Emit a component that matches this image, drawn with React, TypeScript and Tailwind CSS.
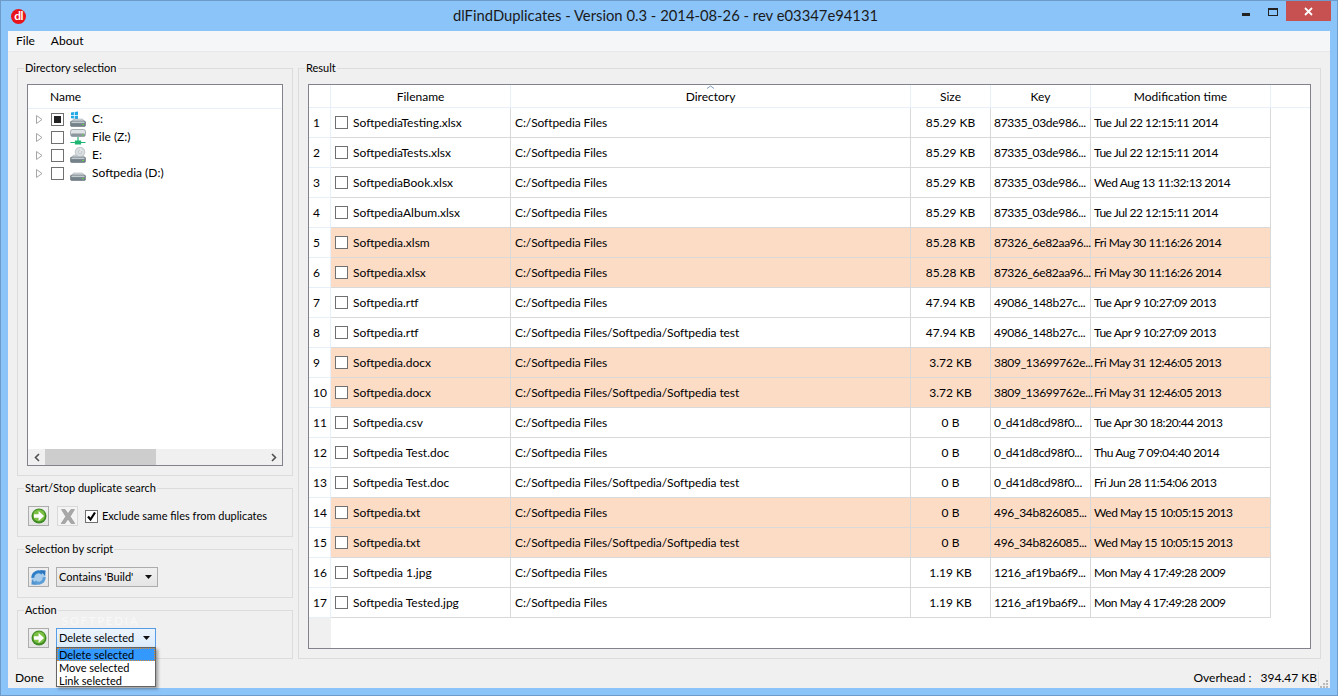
import type { ReactNode } from "react";

type Row = { name: string; dir: string; size: string; key: string; time: string; dup?: boolean };

const ROOT = "C:/Softpedia Files";
const DEEP = "C:/Softpedia Files/Softpedia/Softpedia test";

const rows: Row[] = [
  { name: "SoftpediaTesting.xlsx", dir: ROOT, size: "85.29 KB", key: "87335_03de986...", time: "Tue Jul 22 12:15:11 2014" },
  { name: "SoftpediaTests.xlsx", dir: ROOT, size: "85.29 KB", key: "87335_03de986...", time: "Tue Jul 22 12:15:11 2014" },
  { name: "SoftpediaBook.xlsx", dir: ROOT, size: "85.29 KB", key: "87335_03de986...", time: "Wed Aug 13 11:32:13 2014" },
  { name: "SoftpediaAlbum.xlsx", dir: ROOT, size: "85.29 KB", key: "87335_03de986...", time: "Tue Jul 22 12:15:11 2014" },
  { name: "Softpedia.xlsm", dir: ROOT, size: "85.28 KB", key: "87326_6e82aa96...", time: "Fri May 30 11:16:26 2014", dup: true },
  { name: "Softpedia.xlsx", dir: ROOT, size: "85.28 KB", key: "87326_6e82aa96...", time: "Fri May 30 11:16:26 2014", dup: true },
  { name: "Softpedia.rtf", dir: ROOT, size: "47.94 KB", key: "49086_148b27c...", time: "Tue Apr 9 10:27:09 2013" },
  { name: "Softpedia.rtf", dir: DEEP, size: "47.94 KB", key: "49086_148b27c...", time: "Tue Apr 9 10:27:09 2013" },
  { name: "Softpedia.docx", dir: ROOT, size: "3.72 KB", key: "3809_13699762e...", time: "Fri May 31 12:46:05 2013", dup: true },
  { name: "Softpedia.docx", dir: DEEP, size: "3.72 KB", key: "3809_13699762e...", time: "Fri May 31 12:46:05 2013", dup: true },
  { name: "Softpedia.csv", dir: ROOT, size: "0 B", key: "0_d41d8cd98f0...", time: "Tue Apr 30 18:20:44 2013" },
  { name: "Softpedia Test.doc", dir: ROOT, size: "0 B", key: "0_d41d8cd98f0...", time: "Thu Aug 7 09:04:40 2014" },
  { name: "Softpedia Test.doc", dir: DEEP, size: "0 B", key: "0_d41d8cd98f0...", time: "Fri Jun 28 11:54:06 2013" },
  { name: "Softpedia.txt", dir: ROOT, size: "0 B", key: "496_34b826085...", time: "Wed May 15 10:05:15 2013", dup: true },
  { name: "Softpedia.txt", dir: DEEP, size: "0 B", key: "496_34b826085...", time: "Wed May 15 10:05:15 2013", dup: true },
  { name: "Softpedia 1.jpg", dir: ROOT, size: "1.19 KB", key: "1216_af19ba6f9...", time: "Mon May 4 17:49:28 2009" },
  { name: "Softpedia Tested.jpg", dir: ROOT, size: "1.19 KB", key: "1216_af19ba6f9...", time: "Mon May 4 17:49:28 2009" },
];

function GoIcon() {
  return (
    <svg width="16" height="16" viewBox="0 0 16 16">
      <circle cx="8" cy="8" r="7.5" fill="#3f8a26" />
      <circle cx="8" cy="7.5" r="6" fill="#7cc043" />
      <path d="M3 6.2h4.6V3l5.4 5-5.4 5V9.8H3z" fill="#fff" />
    </svg>
  );
}

function StopIcon() {
  return (
    <svg width="16" height="17" viewBox="0 0 16 17">
      <path d="M1.5 1.5h3.6L8 5.8l2.9-4.3h3.6L10.2 8.5l4.6 7h-3.7L8 11l-3.1 4.5H1.2l4.6-7z" fill="#a8a8a8" stroke="#8f8f8f" strokeWidth="0.6" />
    </svg>
  );
}

function RefreshIcon() {
  return (
    <svg width="17" height="17" viewBox="0 0 18 18" fill="none">
      <circle cx="9" cy="9" r="7.5" fill="#a9cdea" />
      <path d="M3 9.5A6 6 0 0 1 13 4.6" stroke="#2f7fc8" strokeWidth="3" />
      <path d="M15 8.5A6 6 0 0 1 5 13.4" stroke="#5c9fd8" strokeWidth="3" />
      <path d="M10.5 1l6 .5-.5 6z" fill="#2a74bc" />
      <path d="M7.5 17l-6-.5.5-6z" fill="#4f94d0" />
    </svg>
  );
}

function DriveBody() {
  return (
    <>
      <path d="M2 10.5 3.5 8h9l2 2.5z" fill="#d6dadd" stroke="#9aa2a8" strokeWidth="0.5" />
      <rect x="0.5" y="10" width="15" height="5.5" rx="1.2" fill="#74828a" stroke="#56626a" strokeWidth="0.5" />
      <rect x="1.5" y="10.5" width="13" height="1.6" fill="#c4ccd1" />
      <rect x="12" y="13" width="2" height="1" fill="#63d04a" />
    </>
  );
}

function SystemDrive() {
  return (
    <svg width="16" height="16" viewBox="0 0 16 16">
      <path d="M1 1.4 3.9 1v3H1zM4.7.9 8 .4V4H4.7zM1 4.8h2.9v2.8L1 7.2zM4.7 4.8H8v3.4l-3.3-.5z" fill="#1fa8e6" />
      <DriveBody />
    </svg>
  );
}

function NetDrive() {
  return (
    <svg width="16" height="16" viewBox="0 0 16 16">
      <rect x="0.5" y="0.5" width="15" height="7" rx="2" fill="#dfe3e5" stroke="#87949b" strokeWidth="0.7" />
      <rect x="1" y="4.5" width="14" height="3" rx="1" fill="#8b979e" />
      <rect x="12" y="5.5" width="2" height="1" fill="#63d04a" />
      <path d="M8 8v4M.5 13.5h15M5.5 12h5v3h-5z" stroke="#1fb573" strokeWidth="1.2" fill="#1fb573" />
    </svg>
  );
}

function DiscDrive() {
  return (
    <svg width="16" height="16" viewBox="0 0 16 16">
      <DriveBody />
      <circle cx="10" cy="5" r="4.8" fill="#d8dde0" stroke="#99a3a9" strokeWidth="0.5" />
      <circle cx="10" cy="5" r="1.4" fill="#fff" stroke="#8a949a" strokeWidth="0.5" />
      <path d="M10 1l2 2.5-1.3.5z" fill="#f4f6f7" />
    </svg>
  );
}

function PlainDrive() {
  return (
    <svg width="16" height="16" viewBox="0 0 16 16">
      <DriveBody />
    </svg>
  );
}

function Check({ state = "off" }: { state?: "off" | "on" | "partial" }) {
  return (
    <span className="flex h-[13px] w-[13px] shrink-0 items-center justify-center border border-[#707070] bg-white">
      {state === "partial" && <span className="h-[7px] w-[7px] bg-[#222]" />}
      {state === "on" && (
        <svg width="11" height="11" viewBox="0 0 11 11" fill="none">
          <path d="M2 5.5 4.5 8.5 9 1.5" stroke="#000" strokeWidth="2.2" />
        </svg>
      )}
    </span>
  );
}

function Group({ title, className, children }: { title: string; className: string; children: ReactNode }) {
  return (
    <fieldset className={`border border-[#dcdcdc] px-[9px] ${className}`}>
      <legend className="ml-[-3px] px-px text-[11px] leading-[14px]">{title}</legend>
      {children}
    </fieldset>
  );
}

function ToolButton({ children, disabled }: { children: ReactNode; disabled?: boolean }) {
  return (
    <div
      className={`flex h-[20px] w-[21px] shrink-0 items-center justify-center border ${
        disabled ? "border-[#d9d9d9] bg-[#f4f4f4]" : "border-[#acacac] bg-gradient-to-b from-[#f0f0f0] to-[#e5e5e5]"
      }`}
    >
      {children}
    </div>
  );
}

function Arrow() {
  return (
    <svg width="7" height="4" viewBox="0 0 7 4">
      <path d="M0 0h7L3.5 4z" fill="#111" />
    </svg>
  );
}

function TreeRow({ icon, label, state }: { icon: ReactNode; label: string; state?: "partial" }) {
  return (
    <div className="flex h-[18px] items-center pl-[8px]">
      <svg width="7" height="9" viewBox="0 0 7 9" fill="none">
        <path d="M.5.5v8l5.5-4z" stroke="#a6a6a6" fill="#fff" />
      </svg>
      <span className="ml-[8px]">
        <Check state={state} />
      </span>
      <span className="ml-[6px] shrink-0">{icon}</span>
      <span className="ml-[6px]">{label}</span>
    </div>
  );
}

function Scrollbar() {
  return (
    <div className="flex h-[16px] items-center bg-[#f0f0f0]">
      <div className="flex w-[17px] justify-center">
        <svg width="6" height="9" viewBox="0 0 6 9" fill="none">
          <path d="M5 1 1.5 4.5 5 8" stroke="#505050" strokeWidth="1.6" />
        </svg>
      </div>
      <div className="h-full w-[111px] bg-[#cdcdcd]" />
      <div className="flex-1" />
      <div className="flex w-[17px] justify-center">
        <svg width="6" height="9" viewBox="0 0 6 9" fill="none">
          <path d="M1 1l3.5 3.5L1 8" stroke="#505050" strokeWidth="1.6" />
        </svg>
      </div>
    </div>
  );
}

const headCell = "flex h-full items-center justify-center border-r border-[#e6effa] pt-px";

function ResultTable() {
  return (
    <div className="flex h-[565px] flex-col border border-[#82828c] bg-white">
      <div className="flex h-[23px] shrink-0 border-b border-[#e6effa] bg-white">
        <div className={`${headCell} w-[22px]`} />
        <div className={`${headCell} w-[180px]`}>Filename</div>
        <div className={`${headCell} relative w-[400px]`}>
          Directory
          <svg className="absolute left-[195px] top-0" width="9" height="4" viewBox="0 0 9 4" fill="none">
            <path d="M1 3.5 4.5 1 8 3.5" stroke="#7f9cbc" />
          </svg>
        </div>
        <div className={`${headCell} w-[80px]`}>Size</div>
        <div className={`${headCell} w-[100px]`}>Key</div>
        <div className={`${headCell} w-[180px]`}>Modification time</div>
      </div>
      <div className="flex flex-1">
        <div className="flex w-[22px] shrink-0 flex-col bg-[#f0f0f0]">
          {rows.map((_, i) => (
            <div key={i} className="flex h-[30px] items-center border-b border-r border-b-[#e6effa] border-r-[#e6effa] bg-white pl-[4px]">
              {i + 1}
            </div>
          ))}
        </div>
        <div className="flex flex-col">
          {rows.map((r, i) => (
            <div key={i} className={`flex h-[30px] ${r.dup ? "bg-[#fddcc6]" : "bg-white"}`}>
              <div className="flex w-[180px] items-center border-b border-r border-[#d9d9d9] pl-[4px]">
                <Check />
                <span className="ml-[5px]">{r.name}</span>
              </div>
              <div className="flex w-[400px] items-center border-b border-r border-[#d9d9d9] pl-[4px] tracking-[-0.1px]">{r.dir}</div>
              <div className="flex w-[80px] items-center justify-center border-b border-r border-[#d9d9d9]">{r.size}</div>
              <div className="flex w-[100px] items-center whitespace-nowrap border-b border-r border-[#d9d9d9] pl-[3px] tracking-[-0.3px]">{r.key}</div>
              <div className="flex w-[180px] items-center border-b border-r border-[#d9d9d9] pl-[3px] tracking-[-0.45px]">{r.time}</div>
            </div>
          ))}
        </div>
      </div>
    </div>
  );
}

export default function App() {
  return (
    <div className="relative flex h-[696px] w-[1338px] flex-col overflow-hidden border border-[#6f9bcb] bg-[#8bc4f9] font-['Lato','Open_Sans',sans-serif] text-[12px] text-black">
      {/* title bar */}
      <div className="flex h-[30px] shrink-0 items-center">
        <div className="ml-[10px] flex h-[15px] w-[15px] items-center justify-center rounded-full bg-[#e8141c] text-[12px] font-bold leading-none tracking-tighter text-white">
          dl
        </div>
        <div className="ml-[63px] flex-1 pb-[2px] text-center text-[14.8px] text-[#1a1a1a]">dlFindDuplicates - Version 0.3 - 2014-08-26 - rev e03347e94131</div>
        <div className="flex h-[30px] items-start">
          <div className="mt-[12px] h-[3px] w-[8px] bg-[#222]" />
          <div className="ml-[18px] mt-[7px] h-[8px] w-[10px] border border-t-[2px] border-[#222]" />
          <div className="ml-[8px] mr-[6px] flex h-[20px] w-[45px] items-center justify-center bg-[#c75050]">
            <svg width="9" height="9" viewBox="0 0 9 9">
              <path d="M1 1l7 7M8 1 1 8" stroke="#fff" strokeWidth="1.8" />
            </svg>
          </div>
        </div>
      </div>

      {/* client area */}
      <div className="mx-[7px] flex min-h-0 flex-1 flex-col bg-[#f0f0f0]">
        <div className="flex h-[21px] shrink-0 items-center gap-[16px] border-b border-[#e8e8e8] bg-[#f5f6f7] pl-[8px]">
          <span>File</span>
          <span>About</span>
        </div>

        <div className="flex flex-1 gap-[5px] pl-[9px] pr-[9px] pt-[9px]">
          <div className="flex w-[276px] shrink-0 flex-col gap-[5px]">
            <Group title="Directory selection" className="h-[415px]">
              <div className="mt-[9px] flex h-[382px] flex-col border border-[#82828c] bg-white">
                <div className="flex h-[24px] shrink-0 items-center border-b border-[#e6effa] pl-[22px]">Name</div>
                <div className="flex-1 pt-px">
                  <TreeRow icon={<SystemDrive />} label="C:" state="partial" />
                  <TreeRow icon={<NetDrive />} label="File (Z:)" />
                  <TreeRow icon={<DiscDrive />} label="E:" />
                  <TreeRow icon={<PlainDrive />} label="Softpedia (D:)" />
                </div>
                <Scrollbar />
              </div>
            </Group>

            <Group title="Start/Stop duplicate search" className="h-[56px]">
              <div className="mt-[11px] flex items-center pl-px">
                <ToolButton>
                  <GoIcon />
                </ToolButton>
                <div className="ml-[8px]">
                  <ToolButton disabled>
                    <StopIcon />
                  </ToolButton>
                </div>
                <span className="ml-[7px]">
                  <Check state="on" />
                </span>
                <span className="ml-[4px] whitespace-nowrap text-[11px]">Exclude same files from duplicates</span>
              </div>
            </Group>

            <Group title="Selection by script" className="h-[56px]">
              <div className="mt-[11px] flex items-center gap-[7px] pl-px">
                <ToolButton>
                  <RefreshIcon />
                </ToolButton>
                <div className="flex h-[20px] w-[102px] items-center justify-between border border-[#acacac] bg-gradient-to-b from-[#f0f0f0] to-[#e5e5e5] pl-[2px] pr-[5px] text-[11px]">
                  <span>Contains 'Build'</span>
                  <Arrow />
                </div>
              </div>
            </Group>

            <Group title="Action" className="relative h-[56px]">
              {/* faint watermark burnt into the screenshot */}
              <div className="absolute left-[44px] top-[-2px] whitespace-nowrap text-[11px] leading-[11px] tracking-[2px] text-[#f8f8f8]">SOFTPEDIA</div>
              <div className="relative mt-[11px] flex items-center gap-[7px] pl-px">
                <ToolButton>
                  <GoIcon />
                </ToolButton>
                <div className="flex h-[20px] w-[100px] items-center justify-between border border-[#569de5] bg-gradient-to-b from-[#ecf4fc] to-[#dcecfc] pl-[2px] pr-[5px] text-[11px]">
                  <span>Delete selected</span>
                  <Arrow />
                </div>
              </div>
              {/* open combo list */}
              <div className="absolute left-[38px] top-[30px] w-[100px] border border-[#646464] bg-white text-[11px] leading-[13px] shadow-[2px_2px_3px_rgba(0,0,0,0.35)]">
                <div className="h-[13px] border border-dotted border-[#e08a30] bg-[#3399ff] pl-px leading-[11px]">Delete selected</div>
                <div className="h-[13px] pl-[2px]">Move selected</div>
                <div className="h-[12px] pl-[2px]">Link selected</div>
              </div>
            </Group>
          </div>

          <Group title="Result" className="h-[598px] w-[1023px] shrink-0">
            <div className="mt-[9px]">
              <ResultTable />
            </div>
          </Group>
        </div>

        <div className="relative flex h-[29px] shrink-0 items-center justify-between pl-[7px] pr-[11px] pt-[9px]">
          <span>Done</span>
          <div className="flex items-center">
            <span>Overhead :</span>
            <span className="ml-[9px]">394.47 KB</span>
            <span className="ml-[1px] h-[15px] w-px bg-[#d9d9d9]" />
          </div>
          <svg className="absolute bottom-0 right-[2px]" width="8" height="8" viewBox="0 0 8 8" fill="#b8b8b8">
            <rect x="6" y="0" width="2" height="2" />
            <rect x="3" y="3" width="2" height="2" />
            <rect x="6" y="3" width="2" height="2" />
            <rect x="0" y="6" width="2" height="2" />
            <rect x="3" y="6" width="2" height="2" />
            <rect x="6" y="6" width="2" height="2" />
          </svg>
        </div>
      </div>
      <div className="h-[7px] shrink-0" />
    </div>
  );
}
